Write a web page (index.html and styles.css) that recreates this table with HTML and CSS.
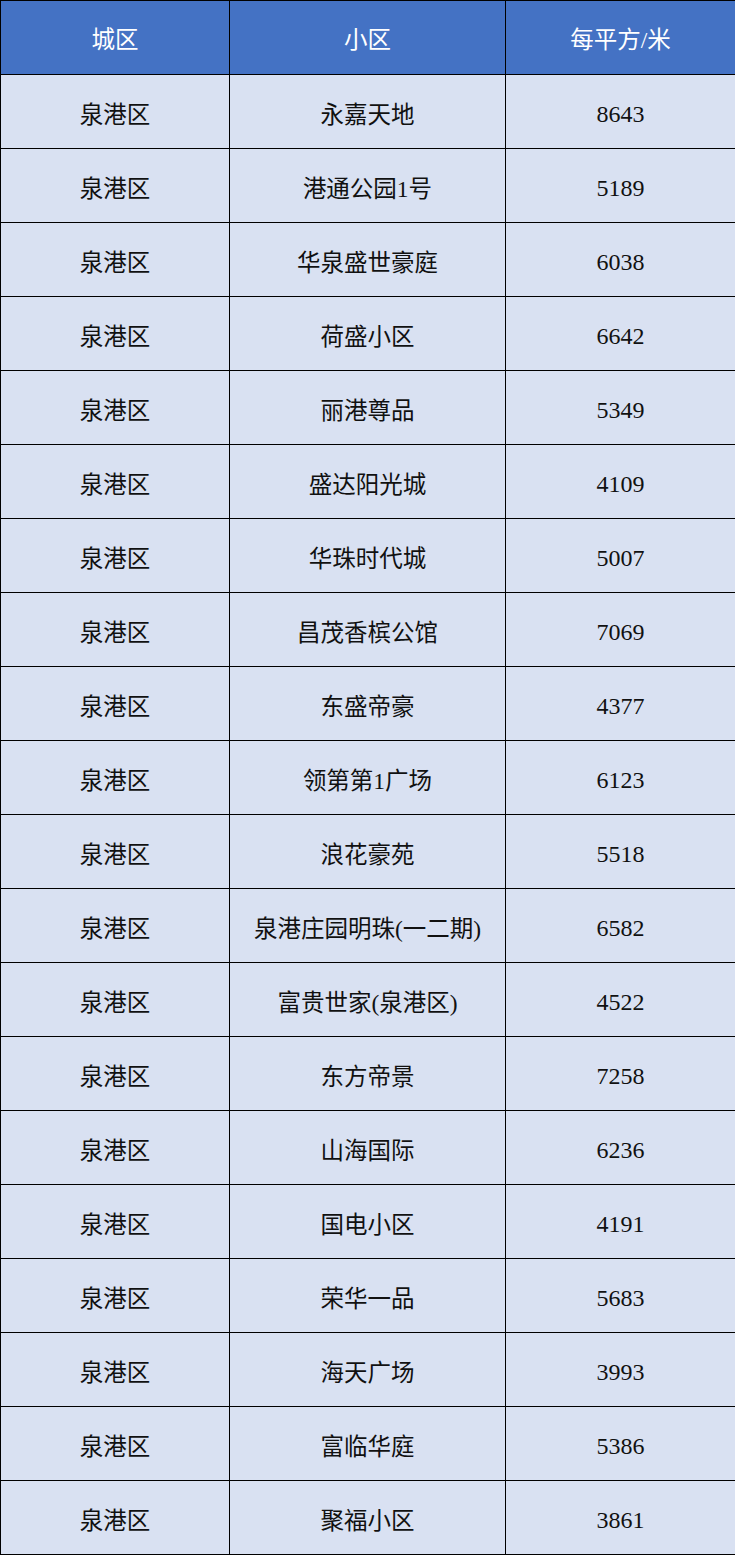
FILE: index.html
```html
<!DOCTYPE html>
<html lang="zh">
<head>
<meta charset="utf-8">
<link rel="stylesheet" href="styles.css">
</head>
<body>
<table class="price-table">
  <colgroup>
    <col class="c1"><col class="c2"><col class="c3">
  </colgroup>
  <thead>
    <tr><th>城区</th><th>小区</th><th>每平方/米</th></tr>
  </thead>
  <tbody>
    <tr><td>泉港区</td><td>永嘉天地</td><td class="num">8643</td></tr>
    <tr><td>泉港区</td><td>港通公园1号</td><td class="num">5189</td></tr>
    <tr><td>泉港区</td><td>华泉盛世豪庭</td><td class="num">6038</td></tr>
    <tr><td>泉港区</td><td>荷盛小区</td><td class="num">6642</td></tr>
    <tr><td>泉港区</td><td>丽港尊品</td><td class="num">5349</td></tr>
    <tr><td>泉港区</td><td>盛达阳光城</td><td class="num">4109</td></tr>
    <tr><td>泉港区</td><td>华珠时代城</td><td class="num">5007</td></tr>
    <tr><td>泉港区</td><td>昌茂香槟公馆</td><td class="num">7069</td></tr>
    <tr><td>泉港区</td><td>东盛帝豪</td><td class="num">4377</td></tr>
    <tr><td>泉港区</td><td>领第第1广场</td><td class="num">6123</td></tr>
    <tr><td>泉港区</td><td>浪花豪苑</td><td class="num">5518</td></tr>
    <tr><td>泉港区</td><td>泉港庄园明珠(一二期)</td><td class="num">6582</td></tr>
    <tr><td>泉港区</td><td>富贵世家(泉港区)</td><td class="num">4522</td></tr>
    <tr><td>泉港区</td><td>东方帝景</td><td class="num">7258</td></tr>
    <tr><td>泉港区</td><td>山海国际</td><td class="num">6236</td></tr>
    <tr><td>泉港区</td><td>国电小区</td><td class="num">4191</td></tr>
    <tr><td>泉港区</td><td>荣华一品</td><td class="num">5683</td></tr>
    <tr><td>泉港区</td><td>海天广场</td><td class="num">3993</td></tr>
    <tr><td>泉港区</td><td>富临华庭</td><td class="num">5386</td></tr>
    <tr><td>泉港区</td><td>聚福小区</td><td class="num">3861</td></tr>
  </tbody>
</table>
</body>
</html>
```
FILE: styles.css
```css
html, body {
  margin: 0;
  padding: 0;
  background: #ffffff;
}
.price-table {
  width: 735px;
  border-collapse: collapse;
  table-layout: fixed;
  font-family: "Liberation Serif", "Noto Sans CJK SC", serif;
  font-size: 23.5px;
}
.c1 { width: 229px; }
.c2 { width: 276px; }
.c3 { width: 230px; }
.price-table th,
.price-table td {
  border: 1px solid #000;
  height: 74px;
  padding: 0;
  box-sizing: border-box;
  text-align: center;
  vertical-align: middle;
  white-space: nowrap;
}
.price-table th {
  background: #4472c4;
  color: #ffffff;
  font-weight: normal;
}
.price-table td {
  background: #d9e1f2;
  color: #111111;
  padding-top: 3px;
}
.price-table td.num {
  font-size: 24px;
  padding-top: 6px;
}
```
